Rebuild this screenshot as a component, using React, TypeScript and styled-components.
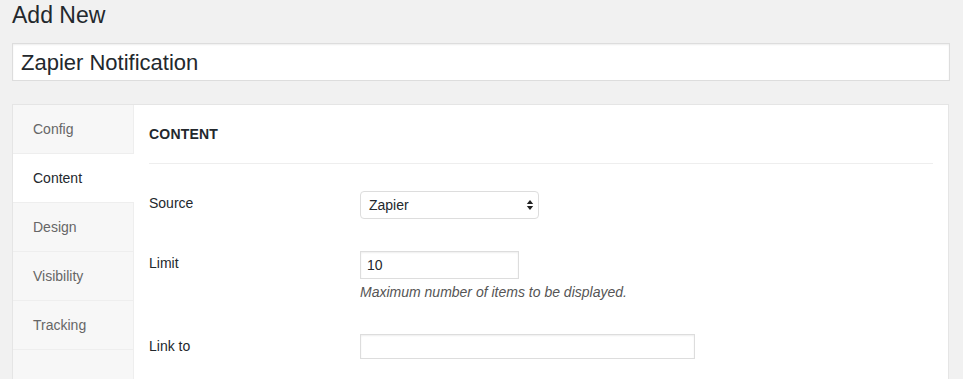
import React, {useState} from 'react';
import styled, {createGlobalStyle} from 'styled-components';

const tabs = ['Config', 'Content', 'Design', 'Visibility', 'Tracking'];

export default function App(): JSX.Element {
  const [activeTab, setActiveTab] = useState<string>('Content');

  return (
    <>
      <GlobalStyle />
      <Page>
        <Title>Add New</Title>
        <TitleInput defaultValue="Zapier Notification" />
        <Panel>
          <Sidebar>
            {tabs.map((tab) => (
              <Tab key={tab} $active={tab === activeTab} onClick={() => setActiveTab(tab)}>
                {tab}
              </Tab>
            ))}
          </Sidebar>
          <Content>
            <SectionTitle>Content</SectionTitle>
            <Form>
              <Row>
                <Label>Source</Label>
                <Field>
                  <SelectBox>
                    <span>Zapier</span>
                    <svg width="8" height="12" viewBox="0 0 8 12">
                      <path d="M4 1 L7.2 5 H0.8 Z" fill="#222" />
                      <path d="M4 11 L7.2 7 H0.8 Z" fill="#222" />
                    </svg>
                  </SelectBox>
                </Field>
              </Row>
              <Row>
                <Label>Limit</Label>
                <Field>
                  <TextInput $width={159} defaultValue="10" />
                  <Description>Maximum number of items to be displayed.</Description>
                </Field>
              </Row>
              <Row>
                <Label>Link to</Label>
                <Field>
                  <TextInput $width={335} $height={25} defaultValue="" />
                </Field>
              </Row>
            </Form>
          </Content>
        </Panel>
      </Page>
    </>
  );
};

const GlobalStyle = createGlobalStyle`
  html, body {
    margin: 0;
    padding: 0;
    background: #f1f1f1;
    overflow: hidden;
  }
  body {
    font-family: "Liberation Sans", Arial, sans-serif;
    color: #23282d;
  }
  * {
    box-sizing: border-box;
  }
`;

const Page = styled.div`
  padding: 0 13px 0 12px;
  height: 379px;
  overflow: hidden;
`;
const Title = styled.h1`
  margin: 0;
  padding: 1px 0 0;
  font-size: 23px;
  font-weight: 400;
  line-height: 29px;
  color: #23282d;
`;
const TitleInput = styled.input`
  display: block;
  width: 100%;
  height: 38px;
  margin: 13px 0 0;
  padding: 4px 8px 3px;
  font-family: inherit;
  font-size: 22px;
  color: #23282d;
  background: #fff;
  border: 1px solid #ddd;
  box-shadow: inset 0 1px 2px rgba(0, 0, 0, 0.07);
  outline: 0;
`;
const Panel = styled.section`
  display: flex;
  margin-top: 23px;
  margin-right: 1px;
  height: 276px;
  background: #fff;
  border: 1px solid #e5e5e5;
`;
const Sidebar = styled.nav`
  display: flex;
  flex-direction: column;
  width: 121px;
  flex-shrink: 0;
  background: #f7f7f7;
  border-right: 1px solid #eee;
`;
const Tab = styled.div<{$active?: boolean}>`
  height: 49px;
  padding-left: 20px;
  margin-right: ${({$active}) => ($active ? '-1px' : '0')};
  font-size: 14px;
  line-height: 49px;
  color: ${({$active}) => ($active ? '#23282d' : '#666')};
  background: ${({$active}) => ($active ? '#fff' : 'transparent')};
  border-bottom: 1px solid #eee;
  cursor: pointer;
`;
const Content = styled.div`
  flex: 1;
  padding: 0 15px;
`;
const SectionTitle = styled.h2`
  margin: 0;
  height: 59px;
  font-size: 14px;
  font-weight: 700;
  line-height: 59px;
  text-transform: uppercase;
  letter-spacing: 0.2px;
  border-bottom: 1px solid #eee;
`;
const Form = styled.div`
  display: flex;
  flex-direction: column;
  gap: 32px;
  padding-top: 27px;
`;
const Row = styled.div`
  display: flex;
`;
const Label = styled.div`
  width: 211px;
  flex-shrink: 0;
  margin-top: 3px;
  font-size: 14px;
  line-height: 18px;
  color: #23282d;
`;
const Field = styled.div`
  display: flex;
  flex-direction: column;
  align-items: flex-start;
`;
const SelectBox = styled.div`
  display: flex;
  align-items: center;
  justify-content: space-between;
  width: 179px;
  height: 28px;
  padding: 0 4px 0 8px;
  font-size: 14px;
  color: #23282d;
  background: #fff;
  border: 1px solid #ddd;
  border-radius: 4px;
`;
const TextInput = styled.input<{$width: number; $height?: number}>`
  width: ${({$width}) => $width}px;
  height: ${({$height}) => $height || 28}px;
  padding: 0 6px;
  font-family: inherit;
  font-size: 14px;
  color: #23282d;
  background: #fff;
  border: 1px solid #ddd;
  box-shadow: inset 0 1px 2px rgba(0, 0, 0, 0.07);
  outline: 0;
`;
const Description = styled.p`
  margin: 4px 0 0;
  font-size: 14px;
  font-style: italic;
  line-height: 19px;
  color: #555;
`;
